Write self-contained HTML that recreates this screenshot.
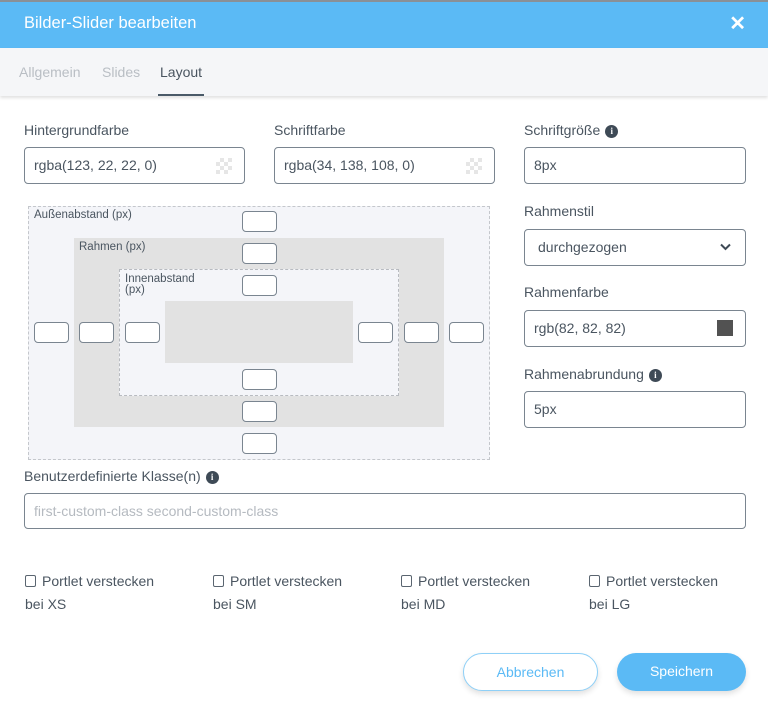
<!DOCTYPE html>
<html><head><meta charset="utf-8"><style>
*{box-sizing:border-box;margin:0;padding:0}
body{width:768px;height:713px;background:#fff;font-family:"Liberation Sans",sans-serif;color:#4a5560;position:relative;overflow:hidden}
.a{position:absolute}
.hdr{left:0;top:0;width:768px;height:48px;background:#5bbaf5;border-top:2px solid #8a9096}
.hdr span{position:absolute;left:24px;top:12px;color:#fff;font-size:16.5px}
.x{right:22px;top:11px;color:#fff;font-size:20px;font-weight:bold}
.tabs{left:0;top:48px;width:768px;height:48px;background:#f5f6f8;box-shadow:0 2px 3px rgba(0,0,0,.12)}
.tab{top:64px;font-size:14px;color:#b9bec4}
.lbl{font-size:14px;color:#4a5560}
.in{border:1px solid #7a8590;border-radius:4px;background:#fff;height:37px;font-size:14px;padding:0 9px;line-height:35px;color:#4a5560}
.i{display:inline-block;width:13px;height:13px;border-radius:50%;background:#3e4a56;color:#fff;font-size:9px;font-weight:bold;text-align:center;line-height:13px;vertical-align:1px;margin-left:5px;font-family:"Liberation Serif",serif}
.s{width:35px;height:21px;border:1px solid #7a8590;border-radius:4px;background:#fff}
.cb{font-size:14px;color:#4a5560;line-height:23px}
.cb b{display:inline-block;width:11px;height:12px;border:1.5px solid #5a6570;border-radius:2px;vertical-align:-1px;margin-right:6px}
.btn{height:38px;border-radius:19px;font-size:14px;text-align:center;line-height:36px;box-shadow:0 3px 6px rgba(0,0,0,.12)}
.chk{width:16px;height:16px;background:linear-gradient(45deg,#e6e6e6 25%,transparent 25%,transparent 75%,#e6e6e6 75%),linear-gradient(45deg,#e6e6e6 25%,transparent 25%,transparent 75%,#e6e6e6 75%);background-size:8px 8px;background-position:0 0,4px 4px}
</style></head><body>
<div class="a hdr"><span>Bilder-Slider bearbeiten</span></div>
<div class="a x">✕</div>
<div class="a tabs"></div>
<div class="a tab" style="left:19px">Allgemein</div>
<div class="a tab" style="left:102px">Slides</div>
<div class="a tab" style="left:160px;color:#4a5560">Layout</div>
<div class="a" style="left:158px;top:94px;width:46px;height:2px;background:#4a5a68"></div>

<div class="a lbl" style="left:24px;top:122px">Hintergrundfarbe</div>
<div class="a lbl" style="left:274px;top:122px">Schriftfarbe</div>
<div class="a lbl" style="left:524px;top:122px">Schriftgröße<span class="i">i</span></div>
<div class="a in" style="left:24px;top:147px;width:221px">rgba(123, 22, 22, 0)</div>
<div class="a chk" style="left:216px;top:158px"></div>
<div class="a in" style="left:274px;top:147px;width:221px">rgba(34, 138, 108, 0)</div>
<div class="a chk" style="left:466px;top:158px"></div>
<div class="a in" style="left:524px;top:147px;width:222px">8px</div>

<div class="a" style="left:28px;top:206px;width:462px;height:254px;background:#f4f5f9;border:1px dashed #c4c7cc"></div>
<div class="a" style="left:34px;top:209px;font-size:11.5px">Außenabstand (px)</div>
<div class="a" style="left:74px;top:238px;width:370px;height:189px;background:#e2e2e2"></div>
<div class="a" style="left:79px;top:241px;font-size:11.5px">Rahmen (px)</div>
<div class="a" style="left:119px;top:269px;width:280px;height:127px;background:#f4f5f9;border:1px dashed #b8bbc0"></div>
<div class="a" style="left:125px;top:274px;font-size:11.5px;line-height:11px">Innenabstand<br>(px)</div>
<div class="a" style="left:165px;top:301px;width:188px;height:62px;background:#e2e2e2"></div>
<div class="a s" style="left:242px;top:211px"></div>
<div class="a s" style="left:242px;top:243px"></div>
<div class="a s" style="left:242px;top:275px"></div>
<div class="a s" style="left:242px;top:369px"></div>
<div class="a s" style="left:242px;top:401px"></div>
<div class="a s" style="left:242px;top:433px"></div>
<div class="a s" style="left:34px;top:322px"></div>
<div class="a s" style="left:79px;top:322px"></div>
<div class="a s" style="left:125px;top:322px"></div>
<div class="a s" style="left:358px;top:322px"></div>
<div class="a s" style="left:404px;top:322px"></div>
<div class="a s" style="left:449px;top:322px"></div>

<div class="a lbl" style="left:524px;top:203px">Rahmenstil</div>
<div class="a in" style="left:524px;top:229px;width:222px;padding-left:13px">durchgezogen</div>
<svg class="a" style="left:719px;top:242px" width="13" height="10" viewBox="0 0 13 10"><path d="M2 2.5l4.5 4.5 4.5-4.5" fill="none" stroke="#3e4a56" stroke-width="2"/></svg>
<div class="a lbl" style="left:524px;top:284px">Rahmenfarbe</div>
<div class="a in" style="left:524px;top:310px;width:222px">rgb(82, 82, 82)</div>
<div class="a" style="left:717px;top:320px;width:16px;height:16px;background:#525252"></div>
<div class="a lbl" style="left:524px;top:366px">Rahmenabrundung<span class="i">i</span></div>
<div class="a in" style="left:524px;top:391px;width:222px">5px</div>

<div class="a lbl" style="left:24px;top:468px">Benutzerdefinierte Klasse(n)<span class="i">i</span></div>
<div class="a in" style="left:24px;top:493px;width:722px;height:36px;color:#b5bac0">first-custom-class second-custom-class</div>

<div class="a cb" style="left:25px;top:570px"><b></b>Portlet verstecken<br>bei XS</div>
<div class="a cb" style="left:213px;top:570px"><b></b>Portlet verstecken<br>bei SM</div>
<div class="a cb" style="left:401px;top:570px"><b></b>Portlet verstecken<br>bei MD</div>
<div class="a cb" style="left:589px;top:570px"><b></b>Portlet verstecken<br>bei LG</div>

<div class="a btn" style="left:463px;top:653px;width:135px;border:1px solid #8fd0f7;color:#5bbaf5;background:#fff">Abbrechen</div>
<div class="a btn" style="left:617px;top:653px;width:129px;background:#5bbaf5;color:#fff">Speichern</div>
</body></html>
